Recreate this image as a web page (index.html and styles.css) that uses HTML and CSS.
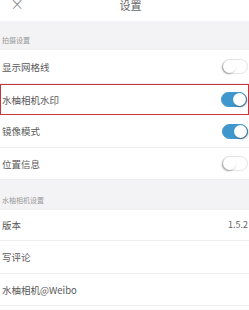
FILE: index.html
```html
<!DOCTYPE html>
<html>
<head>
<meta charset="utf-8">
<link rel="stylesheet" href="styles.css">
</head>
<body>
<div class="page">
  <div class="header">
    <span class="close">×</span>
    <span class="title">设置</span>
  </div>
  <div class="section s1"><span>拍摄设置</span></div>
  <div class="row h34"><span>显示网格线</span><span class="toggle"></span></div>
  <div class="row h31 marked"><span>水柚相机水印</span><span class="toggle on"></span></div>
  <div class="row h33"><span>镜像模式</span><span class="toggle on"></span></div>
  <div class="row h32"><span>位置信息</span><span class="toggle"></span></div>
  <div class="section s2"><span>水柚相机设置</span></div>
  <div class="row h31"><span>版本</span><span class="value">1.5.2</span></div>
  <div class="row h33"><span>写评论</span></div>
  <div class="row h32"><span>水柚相机@Weibo</span></div>
</div>
</body>
</html>
```
FILE: styles.css
```css
* { box-sizing: border-box; }
html, body { margin: 0; padding: 0; background: #fff; }
body { width: 249px; height: 310px; overflow: hidden; font-family: "Noto Sans CJK SC", "Noto Sans", sans-serif; }
.page { display: flex; flex-direction: column; }
.header { height: 21px; position: relative; display: flex; justify-content: center; align-items: flex-start; overflow: hidden; background: #fff; }
.close { position: absolute; left: 10px; top: -6px; font-size: 17px; color: #888; font-family: "DejaVu Sans", sans-serif; font-weight: 300; line-height: 20px; }
.title { margin-top: -3px; margin-left: 12px; font-size: 11px; line-height: 16px; color: #666; }
.section { background: #f3f3f5; display: flex; align-items: flex-end; padding-left: 2px; font-size: 7px; color: #999; line-height: 10px; }
.s1 { height: 29px; padding-bottom: 5px; }
.s2 { height: 30px; padding-bottom: 5px; }
.row { display: flex; align-items: center; justify-content: space-between; padding: 0 1px 0 2px; border-bottom: 1px solid #efefef; font-size: 9.5px; color: #595959; line-height: 12px; }
.h34 { height: 34px; }
.h33 { height: 33px; }
.h32 { height: 32px; }
.h31 { height: 31px; }
.marked { border: 1.5px solid #c8343e; padding-left: 1px; }
.toggle { width: 26px; height: 15px; border-radius: 8px; border: 1px solid #e4e4e4; background: #fff; position: relative; }
.toggle::after { content: ""; position: absolute; left: 0; top: 0; width: 13px; height: 13px; border-radius: 50%; background: #fff; box-shadow: -1px 1px 2px rgba(0,0,0,0.35); }
.toggle.on { background: #3f97cd; border-color: #3f97cd; }
.toggle.on::after { left: 11px; box-shadow: 1px 1px 2px rgba(0,0,0,0.4); }
.value { color: #666; font-size: 9px; margin-right: 0; }
```
